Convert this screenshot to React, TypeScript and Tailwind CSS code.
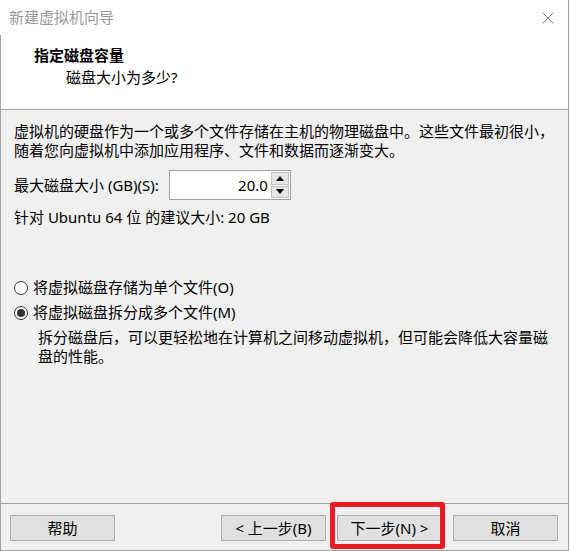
import React from 'react';

const font = {
  fontFamily: '"Noto Sans", "Noto Sans CJK SC", sans-serif',
};

function Radio({ checked, label }: { checked?: boolean; label: string }) {
  return (
    <div className="flex items-center h-[19px]">
      <span className="w-[14px] h-[14px] rounded-full border border-[#333333] bg-white flex items-center justify-center">
        {checked && <span className="w-[8px] h-[8px] rounded-full bg-[#333333]" />}
      </span>
      <span className="ml-[5px] text-[15px] leading-[19px] text-black">{label}</span>
    </div>
  );
}

function Button({ children }: { children: React.ReactNode }) {
  return (
    <button className="w-[105px] h-[26px] bg-[#e1e1e1] border border-[#adadad] text-[15px] leading-[24px] text-black flex items-center justify-center">
      {children}
    </button>
  );
}

export default function App() {
  return (
    <div className="w-[570px] h-[551px] bg-white relative overflow-hidden" style={font}>
      <div className="w-[569px] h-[551px] flex flex-col">
        {/* Title bar */}
        <div className="h-[35px] flex items-center justify-between pl-[9px] pr-[14px] border-r border-[#a0a0a0]">
          <span className="text-[15px] text-[#999999] leading-[19px]">新建虚拟机向导</span>
          <svg width="12" height="12" viewBox="0 0 12 12">
            <path d="M0.5 0.5 L11.5 11.5 M11.5 0.5 L0.5 11.5" stroke="#8a8a8a" strokeWidth="1" fill="none" />
          </svg>
        </div>

        <div className="flex-1 flex flex-col border-l border-r border-b border-[#a0a0a0]">
          {/* Header */}
          <div className="h-[75px] bg-white border-b border-[#a0a0a0] pl-[33px] pt-[11px]">
            <div className="text-[15px] font-bold leading-[19px] text-black">指定磁盘容量</div>
            <div className="text-[15px] leading-[19px] text-black pl-[32px] mt-[3px]">磁盘大小为多少?</div>
          </div>

          {/* Body */}
          <div className="flex-1 bg-[#f0f0f0] pl-[13px] pt-[12px]">
            <p className="text-[15px] leading-[19px] text-black">
              虚拟机的硬盘作为一个或多个文件存储在主机的物理磁盘中。这些文件最初很小，
              <br />
              随着您向虚拟机中添加应用程序、文件和数据而逐渐变大。
            </p>

            <div className="flex items-center mt-[10px]">
              <span className="text-[15px] leading-[19px] text-black">最大磁盘大小 (GB)(S):</span>
              <div className="ml-[10px] h-[30px] w-[122px] border border-[#a0a0a0] bg-white flex">
                <div className="flex-1 text-right text-[15px] leading-[28px] pr-[2px] text-black">20.0</div>
                <div className="w-[20px] flex flex-col p-[1px] gap-[1px]">
                  <div className="flex-1 bg-[#e5e5e5] border border-[#c0c0c0] flex items-center justify-center">
                    <svg width="8" height="5" viewBox="0 0 8 5">
                      <path d="M0 5 L4 0 L8 5 Z" fill="#000" />
                    </svg>
                  </div>
                  <div className="flex-1 bg-[#e5e5e5] border border-[#c0c0c0] flex items-center justify-center">
                    <svg width="8" height="5" viewBox="0 0 8 5">
                      <path d="M0 0 L8 0 L4 5 Z" fill="#000" />
                    </svg>
                  </div>
                </div>
              </div>
            </div>

            <div className="text-[15px] leading-[19px] text-black mt-[8px]">
              针对 Ubuntu 64 位 的建议大小: 20 GB
            </div>

            <div className="mt-[51px] flex flex-col gap-[6px]">
              <Radio label="将虚拟磁盘存储为单个文件(O)" />
              <Radio checked label="将虚拟磁盘拆分成多个文件(M)" />
            </div>
            <p className="pl-[24px] mt-[6px] text-[15px] leading-[19px] text-black">
              拆分磁盘后，可以更轻松地在计算机之间移动虚拟机，但可能会降低大容量磁
              <br />
              盘的性能。
            </p>
          </div>

          {/* Footer */}
          <div className="h-[47px] bg-[#f0f0f0] border-t border-[#a0a0a0] flex items-start pt-[11px] pl-[9px] pr-[10px]">
            <Button>帮助</Button>
            <div className="flex-1" />
            <Button>&lt; 上一步(B)</Button>
            <div className="ml-[11px]">
              <Button>下一步(N) &gt;</Button>
            </div>
            <div className="ml-[11px]">
              <Button>取消</Button>
            </div>
          </div>
        </div>
      </div>

      {/* Highlight box */}
      <div className="absolute left-[330px] top-[502px] w-[115px] h-[47px] border-[5px] border-[#e81c24] rounded-[3px]" />
    </div>
  );
}
